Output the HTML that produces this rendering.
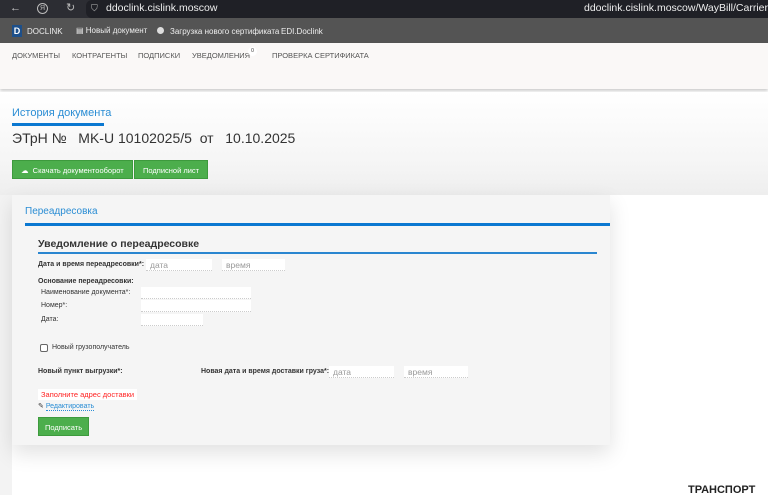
<!DOCTYPE html>
<html><head><meta charset="utf-8"><style>
*{margin:0;padding:0;box-sizing:border-box}
body{width:768px;height:495px;overflow:hidden;background:#fff;font-family:"Liberation Sans",sans-serif;position:relative}
.a{position:absolute}
.top{left:0;top:0;width:768px;height:18px;background:#2c2d33}
.url{left:86px;top:0;width:682px;height:18px;background:#1f2026;border-radius:6px 0 0 6px}
.bm{left:0;top:18px;width:768px;height:25px;background:#545454;color:#eee;font-size:8px}
.nav{left:0;top:43px;width:768px;height:46px;background:#faf8f7;box-shadow:0 2px 3px rgba(0,0,0,.2);font-size:7.5px;color:#555}
.bg{left:0;top:92px;width:768px;height:103px;background:linear-gradient(#fff,#f5f5f5 70%,#eee)}
.card{left:12px;top:195px;width:598px;height:250px;background:#f5f5f5;box-shadow:0 8px 20px rgba(0,0,0,.12)}
.btn{background:#4cae4c;color:#fff;font-size:7.5px;height:19px;line-height:19px;border:1px solid #3d9a3d;padding:0 8px}
.in{background:#fff;border-bottom:1px dotted #ccc;color:#999;font-size:8.5px;height:12px;line-height:12px;padding-left:4px}
.lb{font-size:7px;color:#333}
</style></head><body>
<div class="a top"></div>
<div class="a url"></div>
<div class="a" style="left:10px;top:2px;color:#ccc;font-size:11px">←</div>
<div class="a" style="left:37px;top:3px;width:11px;height:11px;border:1px solid #bbb;border-radius:50%;color:#bbb;font-size:7px;text-align:center;line-height:9px">Я</div>
<div class="a" style="left:66px;top:1px;color:#bbb;font-size:11px">↻</div>
<div class="a" style="left:91px;top:3px;color:#bbb;font-size:9px">⛉</div>
<div class="a" style="left:106px;top:2px;color:#eee;font-size:10.5px">ddoclink.cislink.moscow</div>
<div class="a" style="left:584px;top:2px;color:#eee;font-size:10.5px;white-space:nowrap">ddoclink.cislink.moscow/WayBill/CarrierU</div>
<div class="a bm">
<div class="a" style="left:12px;top:7px;width:10px;height:12px;background:#1d4f8a;color:#fff;font-weight:bold;font-size:9px;text-align:center;line-height:12px">D</div>
<div class="a" style="left:27px;top:9px">DOCLINK</div>
<div class="a" style="left:76px;top:8px">▤ Новый документ</div>
<div class="a" style="left:157px;top:9px;width:7px;height:7px;background:#ddd;border-radius:50%"></div>
<div class="a" style="left:170px;top:9px">Загрузка нового сертификата</div>
<div class="a" style="left:281px;top:9px">EDI.Doclink</div>
</div>
<div class="a nav">
<div class="a" style="left:12px;top:8px">ДОКУМЕНТЫ</div>
<div class="a" style="left:72px;top:8px">КОНТРАГЕНТЫ</div>
<div class="a" style="left:138px;top:8px">ПОДПИСКИ</div>
<div class="a" style="left:192px;top:8px">УВЕДОМЛЕНИЯ</div>
<div class="a" style="left:248px;top:4px;width:9px;height:9px;background:#fff;border-radius:50%;font-size:5px;text-align:center;line-height:9px;color:#333">0</div>
<div class="a" style="left:272px;top:8px">ПРОВЕРКА СЕРТИФИКАТА</div>
</div>
<div class="a bg"></div>
<div class="a" style="left:0;top:195px;width:12px;height:300px;background:#f3f3f3"></div>
<div class="a" style="left:12px;top:107px;color:#2a8dd4;font-size:11px">История документа</div>
<div class="a" style="left:12px;top:123px;width:92px;height:3px;background:#0b78d1"></div>
<div class="a" style="left:12px;top:130px;color:#333;font-size:14px;white-space:pre">ЭТрН №   MK-U 10102025/5  от   10.10.2025</div>
<div class="a btn" style="left:12px;top:160px">☁&nbsp; Скачать документооборот</div>
<div class="a btn" style="left:134px;top:160px">Подписной лист</div>
<div class="a card"></div>
<div class="a" style="left:25px;top:206px;color:#2a8dd4;font-size:10px">Переадресовка</div>
<div class="a" style="left:25px;top:223px;width:585px;height:3px;background:#0b78d1"></div>
<div class="a" style="left:25px;top:226px;width:585px;height:219px;background:#f5f5f5"></div>
<div class="a" style="left:38px;top:238px;color:#333;font-size:10.5px;font-weight:bold">Уведомление о переадресовке</div>
<div class="a" style="left:38px;top:252px;width:559px;height:2px;background:#2a86d0"></div>
<div class="a lb" style="left:38px;top:261px;font-weight:bold">Дата и время переадресовки*:</div>
<div class="a in" style="left:146px;top:259px;width:66px">дата</div>
<div class="a in" style="left:222px;top:259px;width:63px">время</div>
<div class="a lb" style="left:38px;top:278px;font-weight:bold">Основание переадресовки:</div>
<div class="a lb" style="left:41px;top:289px">Наименование документа*:</div>
<div class="a in" style="left:141px;top:287px;width:110px"></div>
<div class="a lb" style="left:41px;top:302px">Номер*:</div>
<div class="a in" style="left:141px;top:300px;width:110px"></div>
<div class="a lb" style="left:41px;top:316px">Дата:</div>
<div class="a in" style="left:141px;top:314px;width:62px"></div>
<div class="a" style="left:40px;top:344px;width:8px;height:8px;border:1px solid #666;border-radius:2px;background:#fff"></div>
<div class="a lb" style="left:52px;top:344px">Новый грузополучатель</div>
<div class="a lb" style="left:38px;top:368px;font-weight:bold">Новый пункт выгрузки*:</div>
<div class="a lb" style="left:201px;top:368px;font-weight:bold">Новая дата и время доставки груза*:</div>
<div class="a in" style="left:329px;top:366px;width:65px">дата</div>
<div class="a in" style="left:404px;top:366px;width:64px">время</div>
<div class="a" style="left:38px;top:389px;background:#fff;color:#f22;font-size:7.5px;padding:1px 3px">Заполните адрес доставки</div>
<div class="a" style="left:38px;top:402px;font-size:7px;color:#333">✎ <span style="color:#2a8dd4;border-bottom:1px dotted #2a8dd4">Редактировать</span></div>
<div class="a btn" style="left:38px;top:417px;height:19px;padding:0 6px">Подписать</div>
<div class="a" style="left:688px;top:484px;font-weight:bold;font-size:11px;color:#222">ТРАНСПОРТ</div>
</body></html>
